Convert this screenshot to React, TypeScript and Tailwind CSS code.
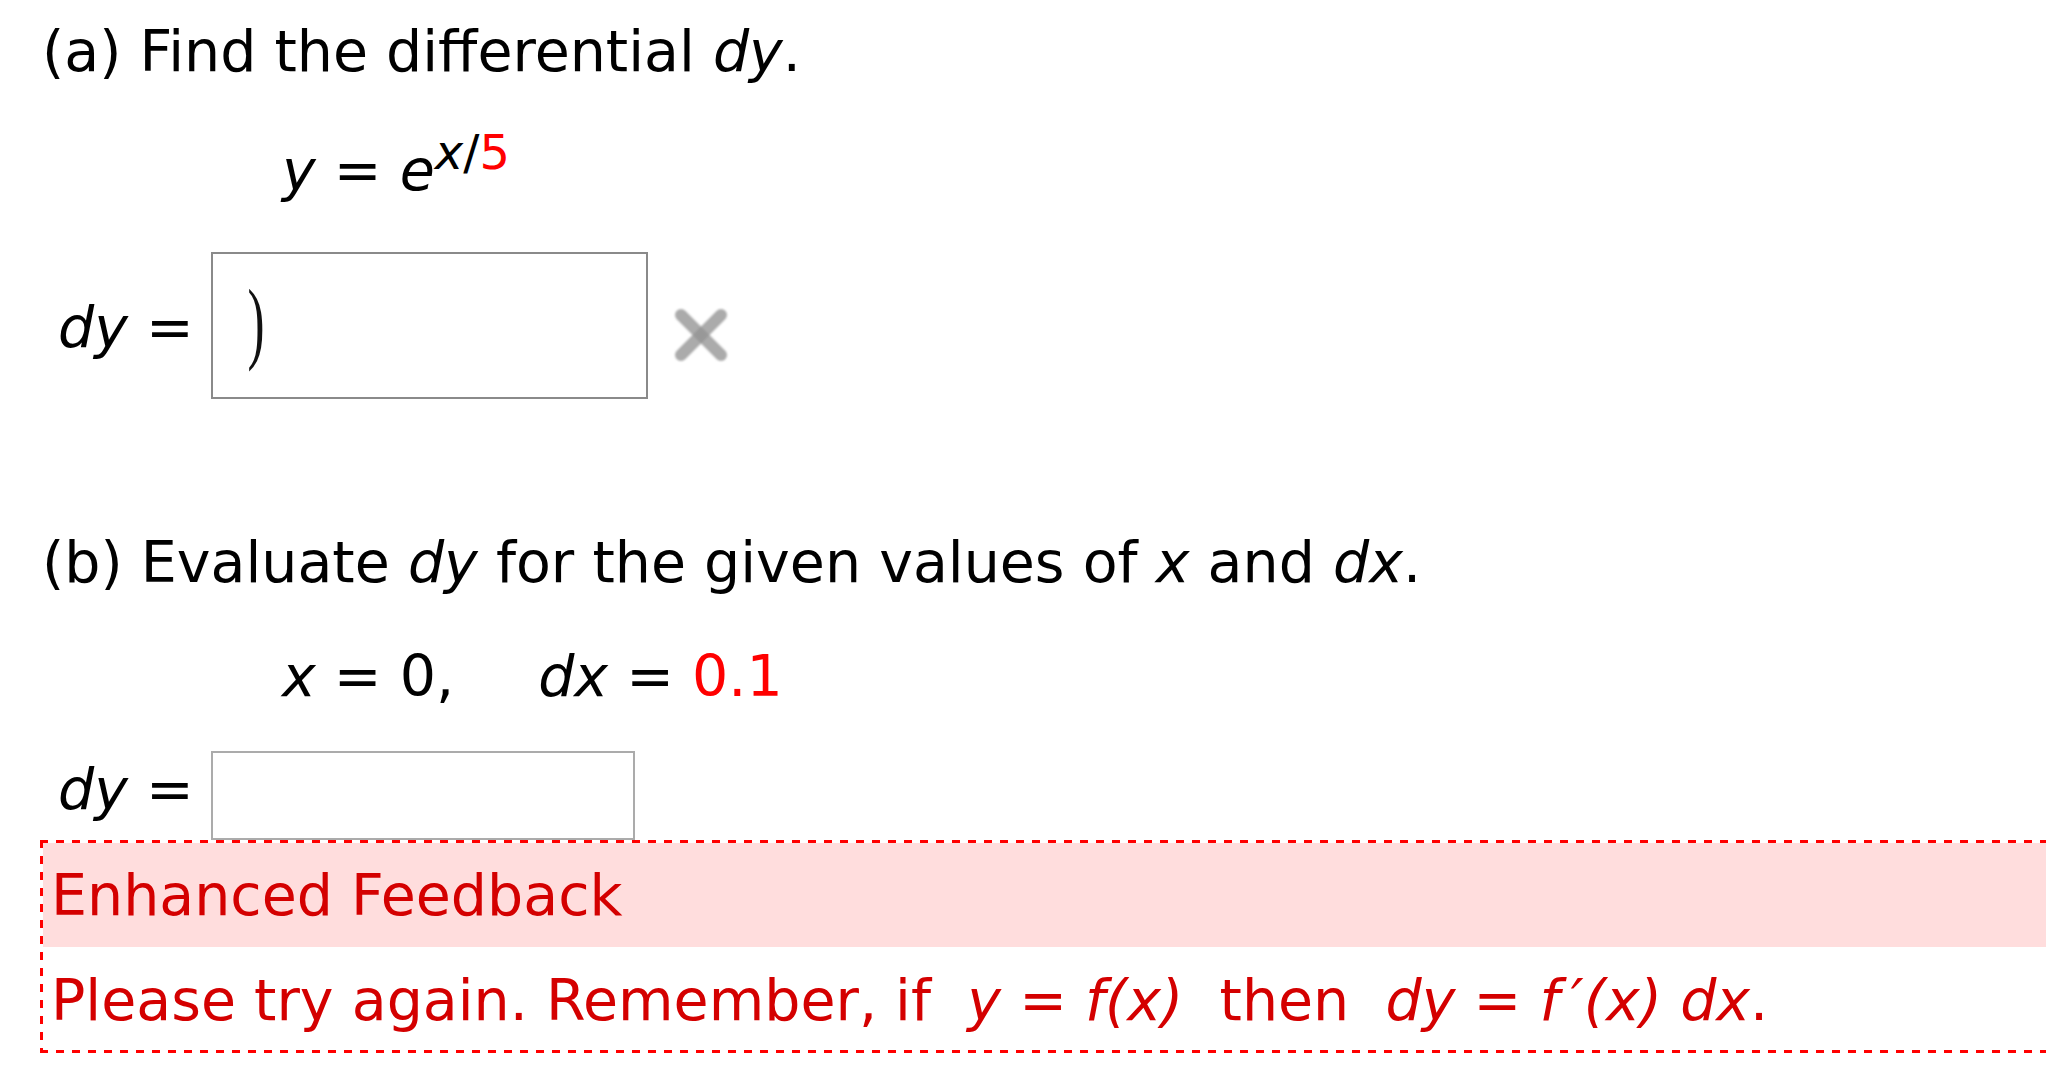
import React from "react";

function XMark() {
  return (
    <svg width="56" height="56" viewBox="0 0 56 56" className="block">
      <defs>
        <filter id="soft" x="-20%" y="-20%" width="140%" height="140%">
          <feGaussianBlur stdDeviation="1.1" />
        </filter>
      </defs>
      <g filter="url(#soft)" strokeLinecap="round">
        <line x1="8" y1="8" x2="48" y2="48" stroke="#939393" strokeOpacity="0.78" strokeWidth="12" />
        <line x1="48" y1="8" x2="8" y2="48" stroke="#939393" strokeOpacity="0.78" strokeWidth="12" />
      </g>
    </svg>
  );
}

export default function App() {
  return (
    <div className="w-[2046px] h-[1065px] overflow-hidden bg-white text-black">
      <div className="pt-[18px] pl-[42px] text-[57px] leading-[67px] font-['DejaVu_Sans','Verdana',sans-serif] whitespace-pre">
        {/* (a) */}
        <div>
          (a) Find the differential <span className="italic">dy</span>.
        </div>

        <div className="mt-[52px] pl-[240px]">
          <span className="italic">y</span> = <span className="italic">e</span>
          <span className="relative -top-[21px] text-[48px]">
            <span className="italic">x</span>/<span className="text-[#ff0000]">5</span>
          </span>
        </div>

        <div className="mt-[45px] flex items-start">
          <div className="mt-[42px] pl-[16px]">
            <span className="italic">dy</span> =
          </div>
          <div className="ml-[17px] w-[437px] h-[147px] border-2 border-[#8a8a8a] bg-white flex items-center pl-[34px]">
            <span className="inline-block font-['Liberation_Serif',serif] text-[54px] leading-[56px] scale-y-[1.7] scale-x-[0.95] -translate-y-[5px] text-[#111]">
              )
            </span>
          </div>
          <div className="ml-[25px] mt-[55px]">
            <XMark />
          </div>
        </div>

        {/* (b) */}
        <div className="mt-[130px]">
          (b) Evaluate <span className="italic">dy</span> for the given values of{" "}
          <span className="italic">x</span> and <span className="italic">dx</span>.
        </div>

        <div className="mt-[47px] pl-[240px]">
          <span className="italic">x</span> = 0,
          <span className="ml-[84px]">
            <span className="italic">dx</span> = <span className="text-[#ff0000]">0.1</span>
          </span>
        </div>

        <div className="mt-[41px] flex items-start">
          <div className="mt-[5px] pl-[16px]">
            <span className="italic">dy</span> =
          </div>
          <div className="ml-[17px] w-[424px] h-[89px] border-2 border-[#ababab] bg-white" />
        </div>

        <div className="-ml-[2px] w-[2100px] p-[3px] bg-white bg-no-repeat [background-image:repeating-linear-gradient(90deg,#ff0000_0_8px,transparent_8px_16px),repeating-linear-gradient(90deg,#ff0000_0_8px,transparent_8px_16px),repeating-linear-gradient(180deg,#ff0000_0_8px,transparent_8px_16px)] [background-size:100%_3px,100%_3px,3px_100%] [background-position:left_top,left_bottom,left_top]">
          <div className="bg-[#ffdddd] pl-[8px] pt-[19px] pb-[18px] text-[#d40000]">Enhanced Feedback</div>
          <div className="pl-[8px] pt-[20px] pb-[16px] text-[#d40000]">
            Please try again. Remember, if{"\u00a0\u00a0"}
            <span className="italic">y</span> = <span className="italic">f</span>
            <span className="italic">(x)</span>
            {"\u00a0\u00a0"}then{"\u00a0\u00a0"}
            <span className="italic">dy</span> = <span className="italic">f{"\u2009\u2032"}(x) dx</span>.
          </div>
        </div>
      </div>
    </div>
  );
}
